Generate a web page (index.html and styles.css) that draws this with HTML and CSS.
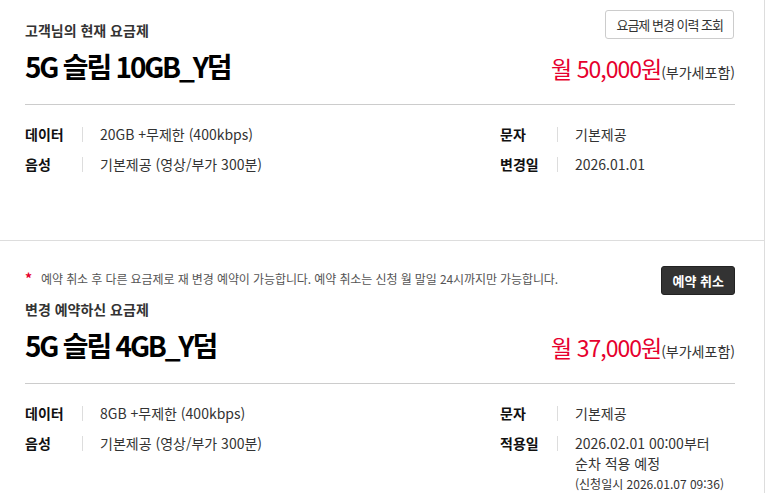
FILE: index.html
```html
<!DOCTYPE html>
<html lang="ko">
<head>
    <meta charset="UTF-8">
    <meta name="viewport" content="width=device-width, initial-scale=1.0">
    <title>요금제 조회</title>
    <link rel="stylesheet" href="styles.css">
</head>
<body>
    <div class="plan-wrap">
        <section class="plan">
            <div class="plan-top">
                <h2 class="plan-label">고객님의 현재 요금제</h2>
                <button type="button" class="btn-line">요금제 변경 이력 조회</button>
            </div>
            <div class="plan-head">
                <strong class="plan-name">5G 슬림 10GB_Y덤</strong>
                <p class="plan-price"><em>월 50,000원</em>(부가세포함)</p>
            </div>
            <div class="plan-info">
                <dl class="info-item">
                    <dt>데이터</dt>
                    <dd>20GB +무제한 (400kbps)</dd>
                </dl>
                <dl class="info-item">
                    <dt>문자</dt>
                    <dd>기본제공</dd>
                </dl>
                <dl class="info-item">
                    <dt>음성</dt>
                    <dd>기본제공 (영상/부가 300분)</dd>
                </dl>
                <dl class="info-item">
                    <dt>변경일</dt>
                    <dd>2026.01.01</dd>
                </dl>
            </div>
        </section>

        <section class="plan reserved">
            <div class="plan-top notice-row">
                <p class="notice"><span class="star">*</span>예약 취소 후 다른 요금제로 재 변경 예약이 가능합니다. 예약 취소는 신청 월 말일 24시까지만 가능합니다.</p>
                <button type="button" class="btn-dark">예약 취소</button>
            </div>
            <h2 class="plan-label">변경 예약하신 요금제</h2>
            <div class="plan-head">
                <strong class="plan-name">5G 슬림 4GB_Y덤</strong>
                <p class="plan-price"><em>월 37,000원</em>(부가세포함)</p>
            </div>
            <div class="plan-info">
                <dl class="info-item">
                    <dt>데이터</dt>
                    <dd>8GB +무제한 (400kbps)</dd>
                </dl>
                <dl class="info-item">
                    <dt>문자</dt>
                    <dd>기본제공</dd>
                </dl>
                <dl class="info-item">
                    <dt>음성</dt>
                    <dd>기본제공 (영상/부가 300분)</dd>
                </dl>
                <dl class="info-item">
                    <dt>적용일</dt>
                    <dd>2026.02.01 00:00부터<br>순차 적용 예정<br><span class="sub">(신청일시 2026.01.07 09:36)</span></dd>
                </dl>
            </div>
        </section>
    </div>
</body>
</html>
```

FILE: styles.css
```css
body {
    margin: 0;
    font-family: "Noto Sans CJK KR", "Noto Sans", sans-serif;
    color: #333;
    background-color: #fff;
}
.plan-wrap {
    width: 764px;
    border-right: 1px solid #ddd;
}
.plan {
    padding: 10px 29px 66px 25px;
    border-bottom: 1px solid #ddd;
}
.plan.reserved {
    padding-top: 25px;
    padding-bottom: 0;
    border-bottom: none;
}
.plan-top {
    display: flex;
    justify-content: space-between;
    align-items: flex-end;
}
.plan-label {
    margin: 0;
    font-size: 14px;
    line-height: 18px;
    font-weight: bold;
    color: #333;
}
.reserved .plan-label {
    margin-top: 5px;
}
.btn-line,
.btn-dark {
    height: 29px;
    border-radius: 3px;
    font-family: inherit;
    font-size: 13px;
    cursor: pointer;
}
.btn-line {
    margin-right: 1px;
    padding: 0 10px;
    background: #fff;
    border: 1px solid #ccc;
    letter-spacing: -1px;
    color: #333;
}
.btn-dark {
    padding: 0 10px 0 11px;
    background: #333;
    border: 1px solid #222;
    color: #fff;
    font-weight: bold;
}
.notice-row {
    align-items: flex-start;
}
.notice {
    margin: 0;
    padding-top: 3px;
    font-size: 12px;
    line-height: 18px;
    letter-spacing: -0.1px;
    color: #555;
}
.star {
    margin-right: 9px;
    color: #e6002d;
    font-weight: bold;
    font-size: 14px;
}
.plan-head {
    display: flex;
    justify-content: space-between;
    align-items: baseline;
    margin: 9px 0 19px;
}
.plan-name {
    font-size: 28px;
    line-height: 36px;
    letter-spacing: -2.2px;
    color: #000;
}
.plan-price {
    margin: 0;
    font-size: 14px;
    color: #333;
}
.plan-price em {
    font-style: normal;
    font-size: 23px;
    letter-spacing: -1px;
    color: #e6002d;
}
.plan-info {
    display: grid;
    grid-template-columns: 475px 1fr;
    row-gap: 10px;
    padding-top: 19px;
    border-top: 1px solid #ccc;
}
.info-item {
    display: flex;
    margin: 0;
    font-size: 14px;
    line-height: 20px;
}
.info-item dt {
    display: flex;
    justify-content: space-between;
    width: 58px;
    flex-shrink: 0;
    font-weight: bold;
    color: #111;
}
.info-item dt::after {
    content: "";
    width: 1px;
    height: 15px;
    margin-top: 3px;
    background: #ddd;
}
.info-item dd {
    margin: 0 0 0 17px;
    color: #333;
}
.info-item .sub {
    font-size: 12px;
}
```
